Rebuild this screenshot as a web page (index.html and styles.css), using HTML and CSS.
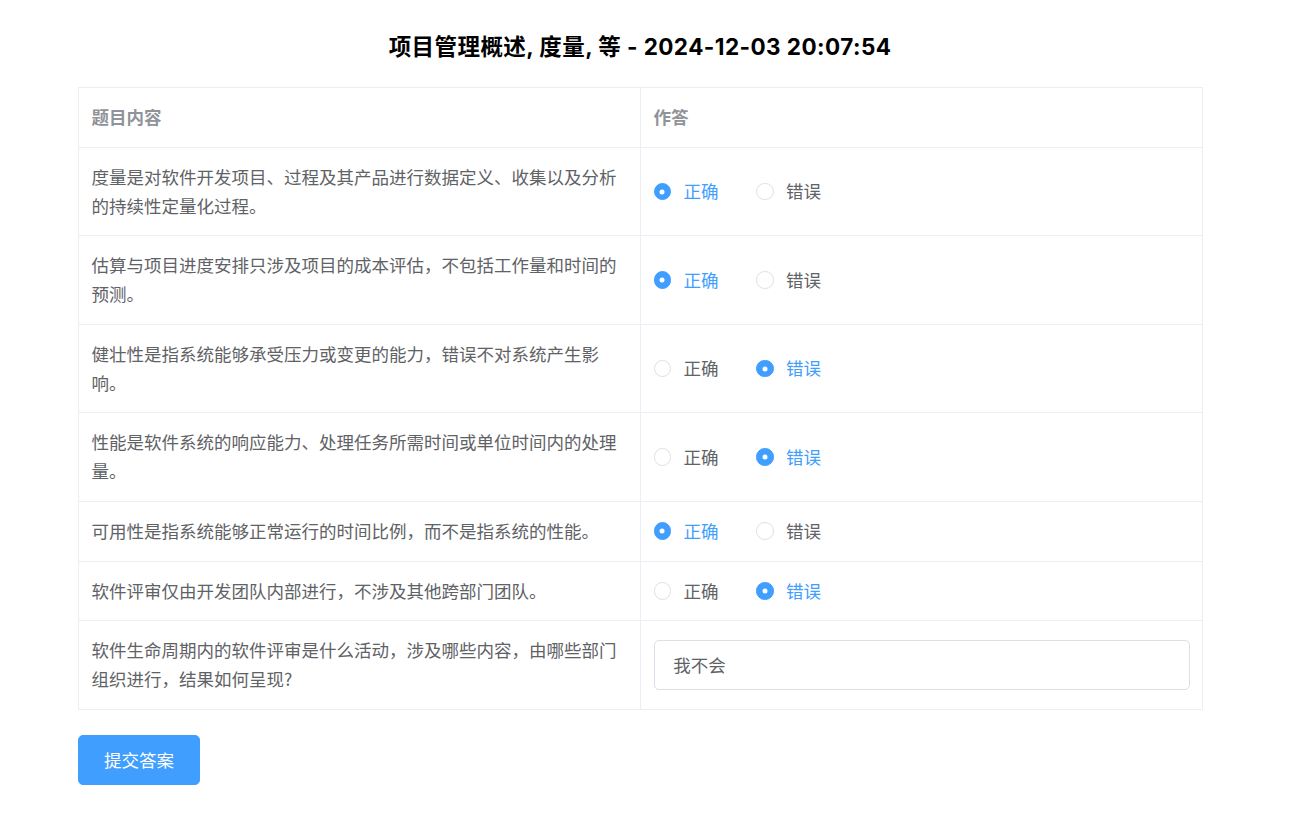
FILE: index.html
```html
<!DOCTYPE html>
<html lang="zh-CN">
<head>
<meta charset="utf-8">
<title>项目管理概述</title>
<link rel="stylesheet" href="styles.css">
</head>
<body>
<div class="page">
  <h3 class="title">项目管理概述, 度量, 等 - 2024-12-03 20:07:54</h3>
  <table class="quiz">
    <colgroup><col class="col-q"><col class="col-a"></colgroup>
    <thead>
      <tr><th><div class="cell">题目内容</div></th><th><div class="cell">作答</div></th></tr>
    </thead>
    <tbody>
      <tr>
        <td><div class="cell">度量是对软件开发项目、过程及其产品进行数据定义、收集以及分析的持续性定量化过程。</div></td>
        <td><div class="cell radios">
          <label class="radio checked"><span class="dot"></span><span class="lbl">正确</span></label>
          <label class="radio"><span class="dot"></span><span class="lbl">错误</span></label>
        </div></td>
      </tr>
      <tr>
        <td><div class="cell">估算与项目进度安排只涉及项目的成本评估，不包括工作量和时间的预测。</div></td>
        <td><div class="cell radios">
          <label class="radio checked"><span class="dot"></span><span class="lbl">正确</span></label>
          <label class="radio"><span class="dot"></span><span class="lbl">错误</span></label>
        </div></td>
      </tr>
      <tr>
        <td><div class="cell">健壮性是指系统能够承受压力或变更的能力，错误不对系统产生影响。</div></td>
        <td><div class="cell radios">
          <label class="radio"><span class="dot"></span><span class="lbl">正确</span></label>
          <label class="radio checked"><span class="dot"></span><span class="lbl">错误</span></label>
        </div></td>
      </tr>
      <tr>
        <td><div class="cell">性能是软件系统的响应能力、处理任务所需时间或单位时间内的处理量。</div></td>
        <td><div class="cell radios">
          <label class="radio"><span class="dot"></span><span class="lbl">正确</span></label>
          <label class="radio checked"><span class="dot"></span><span class="lbl">错误</span></label>
        </div></td>
      </tr>
      <tr>
        <td><div class="cell">可用性是指系统能够正常运行的时间比例，而不是指系统的性能。</div></td>
        <td><div class="cell radios">
          <label class="radio checked"><span class="dot"></span><span class="lbl">正确</span></label>
          <label class="radio"><span class="dot"></span><span class="lbl">错误</span></label>
        </div></td>
      </tr>
      <tr>
        <td><div class="cell">软件评审仅由开发团队内部进行，不涉及其他跨部门团队。</div></td>
        <td><div class="cell radios">
          <label class="radio"><span class="dot"></span><span class="lbl">正确</span></label>
          <label class="radio checked"><span class="dot"></span><span class="lbl">错误</span></label>
        </div></td>
      </tr>
      <tr>
        <td><div class="cell">软件生命周期内的软件评审是什么活动，涉及哪些内容，由哪些部门组织进行，结果如何呈现?</div></td>
        <td><div class="cell"><div class="input">我不会</div></div></td>
      </tr>
    </tbody>
  </table>
  <button class="submit" type="button">提交答案</button>
</div>
</body>
</html>
```
FILE: styles.css
```css
html, body {
  margin: 0;
  padding: 0;
  background: #fff;
}
body {
  font-family: "Noto Sans CJK SC", "Microsoft YaHei", sans-serif;
  color: #606266;
}
.page {
  width: 1124px;
  margin-left: 78px;
  padding-top: 31px;
}
.title {
  margin: 0 0 25px 0;
  font-family: "Inter", "Noto Sans CJK SC", sans-serif;
  font-size: 22.5px;
  line-height: 31px;
  font-weight: 700;
  letter-spacing: 0.44px;
  color: #000;
  text-align: center;
}
.quiz {
  width: 1124px;
  border-collapse: collapse;
  table-layout: fixed;
  font-size: 17.5px;
}
.col-q { width: 562px; }
.col-a { width: 562px; }
.quiz th, .quiz td {
  border: 1px solid #EBEEF5;
  padding: 15px 0;
  text-align: left;
  vertical-align: middle;
}
.quiz th {
  color: #909399;
  font-weight: 700;
}
.cell {
  padding: 0 12.5px;
  line-height: 28.75px;
}
.radios {
  display: flex;
  align-items: center;
}
.radio {
  display: inline-flex;
  align-items: center;
  margin-right: 37.5px;
  color: #606266;
  cursor: pointer;
}
.dot {
  width: 17.5px;
  height: 17.5px;
  box-sizing: border-box;
  border: 1px solid #DCDFE6;
  border-radius: 50%;
  background: #fff;
  position: relative;
}
.radio.checked .dot {
  border-color: #409EFF;
  background: #409EFF;
}
.radio.checked .dot::after {
  content: "";
  position: absolute;
  left: 50%;
  top: 50%;
  width: 5px;
  height: 5px;
  border-radius: 50%;
  background: #fff;
  transform: translate(-50%, -50%);
}
.lbl {
  padding-left: 12.5px;
}
.radio.checked .lbl {
  color: #409EFF;
}
.input {
  height: 50px;
  box-sizing: border-box;
  border: 1px solid #DCDFE6;
  border-radius: 5px;
  padding: 0 18.75px;
  line-height: 48px;
  color: #606266;
}
.submit {
  margin-top: 25px;
  height: 50px;
  padding: 0 25px;
  border: 1px solid #409EFF;
  border-radius: 5px;
  background: #409EFF;
  color: #fff;
  font-family: "Noto Sans CJK SC", "Microsoft YaHei", sans-serif;
  font-size: 17.5px;
  line-height: 48px;
  cursor: pointer;
}
```
